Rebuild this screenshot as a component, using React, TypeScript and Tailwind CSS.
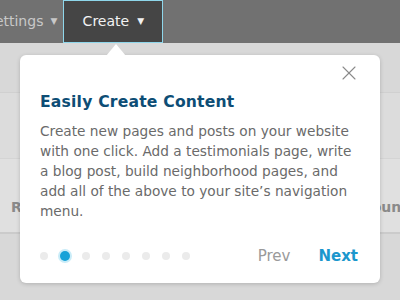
import { X } from 'lucide-react'

const dots = [0, 1, 2, 3, 4, 5, 6, 7]

export default function App() {
    return (
        <div
            className="relative w-[400px] h-[300px] overflow-hidden bg-[#d8d8d8]"
            style={{ fontFamily: '"DejaVu Sans", sans-serif' }}
        >
            {/* top nav */}
            <div className="flex h-[43px] bg-[#717171] items-stretch">
                <div className="flex items-center gap-[7px] ml-[-14px] pr-[6px] text-[14px] text-[#c8c8c8]">
                    Settings <span className="text-[9px]">▼</span>
                </div>
                <div className="flex items-center justify-center gap-2 w-[100px] bg-[#454545] border border-[#8ed6ea] text-[14px] text-[#f2f2f2]">
                    Create <span className="text-[9px]">▼</span>
                </div>
            </div>

            {/* page behind */}
            <div className="h-[49px]" />
            <div className="h-[66px] bg-[#dcdcdc] border-t border-[#d0d0d0]" />
            <div className="flex items-start justify-between pt-[38px] h-[74px] bg-[#e0e0e0] border-t border-[#d4d4d4] text-[14px] text-[#8a8a8a] font-bold">
                <span className="ml-[11px]">R</span>
                <span className="mr-[-8px]">ount</span>
            </div>
            <div className="h-[2px] bg-[#cbcbcb]" />

            {/* popover */}
            <div className="absolute left-[20px] top-[55px] w-[360px] h-[228px] bg-white rounded-[6px] shadow-[0_1px_4px_rgba(0,0,0,0.18)] px-[20px] pt-[36px] pb-[16px] flex flex-col">
                <div className="absolute left-[86px] top-[-11px] w-0 h-0 border-l-[10px] border-r-[10px] border-b-[12px] border-l-transparent border-r-transparent border-b-white" />
                <X
                    className="absolute right-[19px] top-[6px] text-[#8a8a8a]"
                    size={24}
                    strokeWidth={1.1}
                />
                <h2 className="text-[15.6px] font-bold text-[#0d4d75] leading-[22px] tracking-[0.2px]">
                    Easily Create Content
                </h2>
                <p className="mt-[8px] text-[13.7px] leading-[20px] text-[#6a6a6a] w-[317px]">
                    Create new pages and posts on your website with one click. Add a testimonials
                    page, write a blog post, build neighborhood pages, and add all of the above to
                    your site’s navigation menu.
                </p>
                <div className="mt-auto flex items-center justify-between">
                    <div className="flex items-center gap-[12px]">
                        {dots.map((d) =>
                            d === 1 ? (
                                <span
                                    key={d}
                                    className="w-[10px] h-[10px] rounded-full bg-[#17a2d8] ring-2 ring-[#c9ecf8]"
                                />
                            ) : (
                                <span key={d} className="w-[8px] h-[8px] rounded-full bg-[#ebebeb]" />
                            )
                        )}
                    </div>
                    <div className="flex items-center gap-[28px] text-[15px] mr-[2px]">
                        <span className="text-[#9a9a9a]">Prev</span>
                        <span className="text-[#1b97cd] font-bold">Next</span>
                    </div>
                </div>
            </div>
        </div>
    )
}
